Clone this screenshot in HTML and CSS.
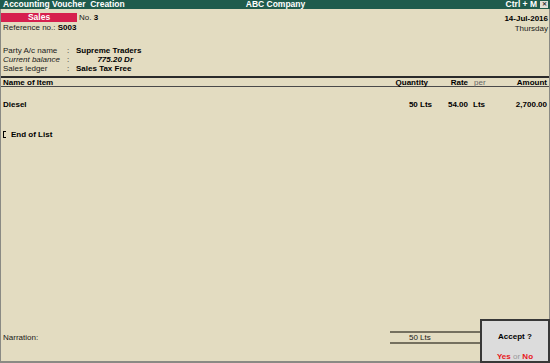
FILE: index.html
```html
<!DOCTYPE html>
<html>
<head>
<meta charset="utf-8">
<link rel="stylesheet" href="styles.css">
</head>
<body>
<div class="screen">
  <div class="titlebar">
    <span class="t-left">Accounting Voucher&nbsp; Creation</span>
    <span class="t-mid">ABC Company</span>
    <span class="t-right">Ctrl + M <span class="close">&#x2715;</span></span>
  </div>
  <div class="frame">
    <div class="top">
      <div class="top-left">
        <div class="vrow">
          <span class="vtype">Sales</span>
          <span class="vno">No. <b>3</b></span>
        </div>
        <div class="ref">Reference no.: <b>S003</b></div>
      </div>
      <div class="top-right">
        <div class="date">14-Jul-2016</div>
        <div class="day">Thursday</div>
      </div>
    </div>
    <div class="party">
      <div class="prow"><span class="lbl">Party A/c name</span><span class="colon">:</span><b>Supreme Traders</b></div>
      <div class="prow"><span class="lbl it">Current balance</span><span class="colon">:</span><b class="bal">775.20 Dr</b></div>
      <div class="prow"><span class="lbl">Sales ledger</span><span class="colon">:</span><b>Sales Tax Free</b></div>
    </div>
    <div class="thead">
      <span class="c-name">Name of Item</span>
      <span class="c-qty">Quantity</span>
      <span class="c-rate">Rate</span>
      <span class="c-per">per</span>
      <span class="c-amt">Amount</span>
    </div>
    <div class="trow item">
      <span class="c-name">Diesel</span>
      <span class="c-qty">50 Lts</span>
      <span class="c-rate">54.00</span>
      <span class="c-per">Lts</span>
      <span class="c-amt">2,700.00</span>
    </div>
    <div class="trow eol">
      <span class="c-name"><span class="cursor"></span>End of List</span>
    </div>
    <div class="spacer"></div>
    <div class="footer">
      <span class="narr">Narration:</span>
      <div class="total">50 Lts</div>
    </div>
  </div>
  <div class="accept">
    <div class="q">Accept ?</div>
    <div class="yn"><span class="red">Yes</span> <span class="or">or</span> <span class="red">No</span></div>
  </div>
</div>
</body>
</html>
```
FILE: styles.css
```css
* { box-sizing: border-box; margin: 0; padding: 0; }
html, body { width: 550px; height: 363px; overflow: hidden; }
body {
  font-family: "Liberation Sans", Arial, sans-serif;
  font-size: 8px;
  color: #1a1a1a;
  background: #e3dcc1;
}
b { font-weight: bold; color: #000; }
.screen { position: relative; width: 550px; height: 363px; display: flex; flex-direction: column; }
.titlebar {
  height: 9px;
  background: #1f5c4d;
  color: #fff;
  font-weight: bold;
  font-size: 8.5px;
  display: flex;
  align-items: center;
  padding: 0 2px 0 3px;
  line-height: 9px;
}
.t-left { flex: 1; }
.t-mid { flex: none; }
.t-right { flex: 1; text-align: right; display: flex; justify-content: flex-end; align-items: center; gap: 3px; }
.close {
  display: inline-block; width: 8px; height: 7px; background: #e0e0d8; color: #333;
  font-size: 6px; line-height: 7px; text-align: center; font-weight: bold;
}
.frame {
  flex: 1;
  display: flex;
  flex-direction: column;
  border-left: 1px solid #8a8a84;
  border-right: 1px solid #8a8a84;
  border-bottom: 2px solid #8a8a84;
}
.top { display: flex; justify-content: space-between; padding-top: 4px; }
.vrow { display: flex; align-items: center; height: 9px; }
.vtype {
  width: 76px; height: 9px; background: #d61f4e; color: #fff; font-weight: bold;
  text-align: center; line-height: 9px; font-size: 8.5px;
}
.vno { margin-left: 2px; line-height: 9px; }
.ref { padding-left: 2px; margin-top: 1px; line-height: 10px; }
.top-right { text-align: right; padding-right: 1px; padding-top: 1px; }
.date { font-weight: bold; color: #000; line-height: 10px; }
.day { line-height: 10px; }
.party { margin-top: 12px; padding-left: 2px; }
.prow { display: flex; height: 9px; line-height: 9px; }
.lbl { width: 64px; }
.it { font-style: italic; }
.colon { width: 9px; }
.bal { font-style: italic; width: 57px; text-align: right; }
.thead, .trow {
  display: grid;
  grid-template-columns: 1fr 62px 36px 30px 49px;
  padding: 0 2px 0 2px;
}
.thead {
  margin-top: 3px;
  border-top: 2px solid #2a2a2a;
  border-bottom: 1px solid #4a4a4a;
  height: 11px;
  line-height: 9px;
  font-weight: bold;
  color: #000;
}
.thead .c-qty { padding-right: 4px; }
.c-qty, .c-rate, .c-amt { text-align: right; }
.c-per { padding-left: 5px; }
.thead .c-per { font-weight: normal; color: #666; padding-left: 6px; }
.trow { line-height: 9px; font-weight: bold; color: #000; }
.item { margin-top: 13px; }
.eol { margin-top: 21px; }
.cursor { display: inline-block; width: 3px; height: 7px; border: 1px solid #000; border-right: none; margin-right: 5px; vertical-align: -1px; }
.spacer { flex: 1; }
.footer { display: flex; align-items: center; margin-bottom: 17px; padding-left: 2px; }
.narr { flex: 1; }
.total {
  width: 90px;
  margin-right: 69px;
  border-top: 2px solid #75705f;
  border-bottom: 2px solid #75705f;
  height: 13px;
  line-height: 9px;
  padding-left: 19px;
}
.accept {
  position: absolute;
  right: 0; bottom: 0;
  width: 70px; height: 44px;
  background: #dcdcdc;
  border: 2px solid #383838;
  text-align: center;
}
.q { font-weight: bold; color: #000; margin-top: 11px; line-height: 10px; }
.yn { margin-top: 10px; font-weight: bold; line-height: 10px; }
.red { color: #e8161b; }
.or { color: #999; font-weight: normal; }
```
